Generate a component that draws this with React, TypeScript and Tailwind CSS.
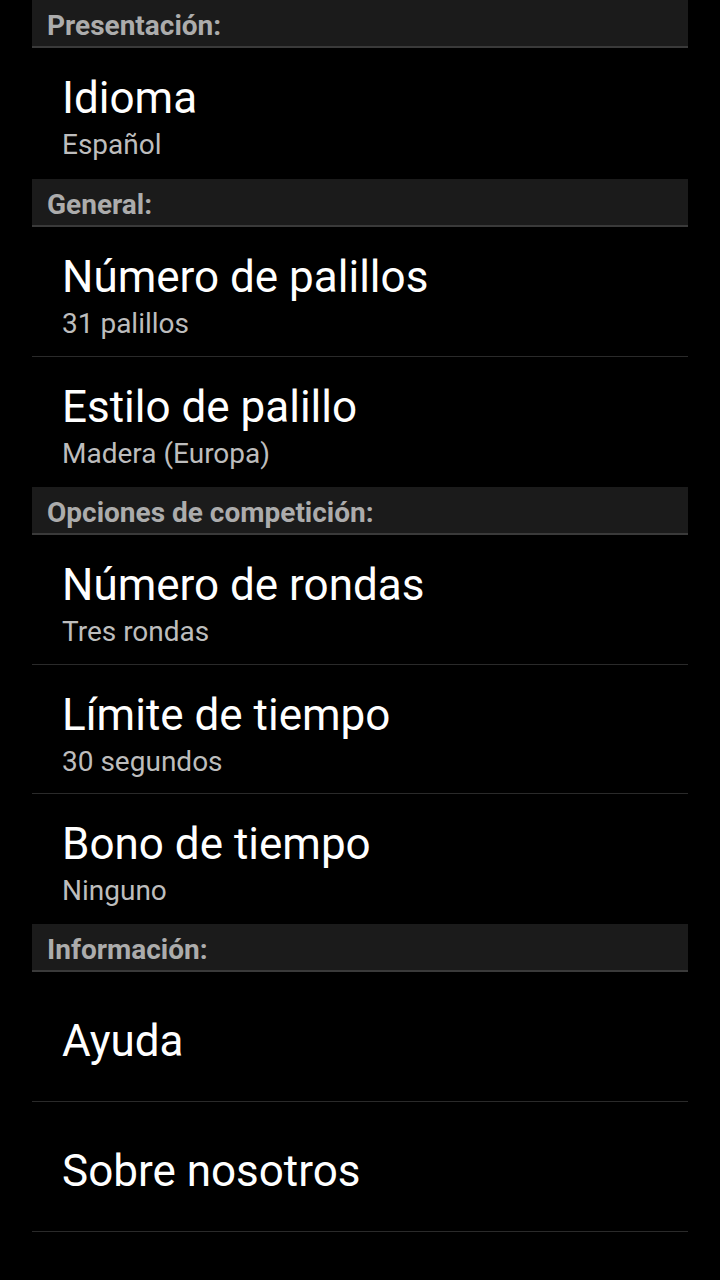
import React from "react";

type Item = { title: string; summary?: string; h: string; divider: boolean };
type Cat = { name: string; items: Item[] };

const cats: Cat[] = [
  {
    name: "Presentación:",
    items: [{ title: "Idioma", summary: "Español", h: "h-[131px]", divider: false }],
  },
  {
    name: "General:",
    items: [
      { title: "Número de palillos", summary: "31 palillos", h: "h-[130px]", divider: true },
      { title: "Estilo de palillo", summary: "Madera (Europa)", h: "h-[130px]", divider: false },
    ],
  },
  {
    name: "Opciones de competición:",
    items: [
      { title: "Número de rondas", summary: "Tres rondas", h: "h-[130px]", divider: true },
      { title: "Límite de tiempo", summary: "30 segundos", h: "h-[129px]", divider: true },
      { title: "Bono de tiempo", summary: "Ninguno", h: "h-[130px]", divider: false },
    ],
  },
  {
    name: "Información:",
    items: [
      { title: "Ayuda", h: "h-[130px]", divider: true },
      { title: "Sobre nosotros", h: "h-[130px]", divider: true },
    ],
  },
];

export default function App() {
  return (
    <div
      className="w-[720px] h-[1280px] bg-black overflow-hidden"
      style={{ fontFamily: "Roboto, 'Noto Sans', sans-serif" }}
    >
      <div className="mx-[32px] flex flex-col">
        {cats.map((c) => (
          <div key={c.name} className="flex flex-col">
            <div className="h-[48px] bg-[#1b1b1b] border-b-2 border-[#3a3a3a] pl-[15px] pt-[9px]">
              <span className="block text-[28px] leading-[33px] font-bold text-[#acacac]">{c.name}</span>
            </div>
            {c.items.map((it) => (
              <div
                key={it.title}
                className={`${it.h} ${it.divider ? "border-b border-[#2a2a2a]" : ""} pl-[30px] ${
                  it.summary ? "pt-[24px]" : "pt-[43px]"
                } flex flex-col`}
              >
                <span className="block text-[44px] leading-[52px] text-white">{it.title}</span>
                {it.summary && (
                  <span className="block mt-[4px] text-[28px] leading-[33px] text-[#bdbdbd]">{it.summary}</span>
                )}
              </div>
            ))}
          </div>
        ))}
      </div>
    </div>
  );
}
